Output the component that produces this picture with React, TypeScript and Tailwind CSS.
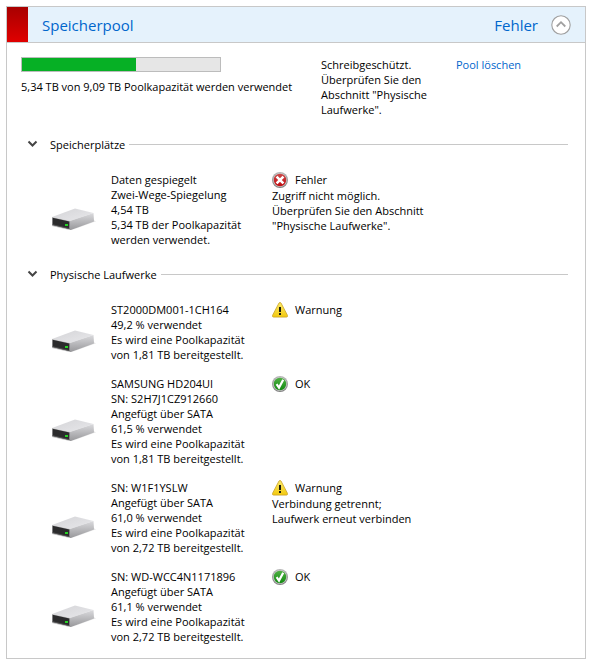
import { useState } from "react";

type Status = "error" | "warning" | "ok";

type Item = {
  lines: string[];
  status: Status;
  label: string;
  details?: string[];
};

const spaces: Item[] = [
  {
    lines: [
      "Daten gespiegelt",
      "Zwei-Wege-Spiegelung",
      "4,54 TB",
      "5,34 TB der Poolkapazität",
      "werden verwendet.",
    ],
    status: "error",
    label: "Fehler",
    details: ["Zugriff nicht möglich.", "Überprüfen Sie den Abschnitt", '"Physische Laufwerke".'],
  },
];

const drives: Item[] = [
  {
    lines: ["ST2000DM001-1CH164", "49,2 % verwendet", "Es wird eine Poolkapazität", "von 1,81 TB bereitgestellt."],
    status: "warning",
    label: "Warnung",
  },
  {
    lines: [
      "SAMSUNG HD204UI",
      "SN: S2H7J1CZ912660",
      "Angefügt über SATA",
      "61,5 % verwendet",
      "Es wird eine Poolkapazität",
      "von 1,81 TB bereitgestellt.",
    ],
    status: "ok",
    label: "OK",
  },
  {
    lines: [
      "SN: W1F1YSLW",
      "Angefügt über SATA",
      "61,0 % verwendet",
      "Es wird eine Poolkapazität",
      "von 2,72 TB bereitgestellt.",
    ],
    status: "warning",
    label: "Warnung",
    details: ["Verbindung getrennt;", "Laufwerk erneut verbinden"],
  },
  {
    lines: [
      "SN: WD-WCC4N1171896",
      "Angefügt über SATA",
      "61,1 % verwendet",
      "Es wird eine Poolkapazität",
      "von 2,72 TB bereitgestellt.",
    ],
    status: "ok",
    label: "OK",
  },
];

function DriveIcon() {
  return (
    <svg width="48" height="48" viewBox="0 0 48 48" aria-hidden="true">
      <defs>
        <linearGradient id="driveTop" x1="0" y1="0" x2="1" y2="1">
          <stop offset="0" stopColor="#d4d4d7" />
          <stop offset="1" stopColor="#e8e8eb" />
        </linearGradient>
        <linearGradient id="driveSide" x1="0" y1="0" x2="0" y2="1">
          <stop offset="0" stopColor="#dadadd" />
          <stop offset="1" stopColor="#98989b" />
        </linearGradient>
      </defs>
      <path d="M22 44 44 36 46 36 44 34z" fill="#e9e9e9" />
      <path d="M2 31 25 22.5 43.5 27 20 35z" fill="url(#driveTop)" />
      <path d="M20 35 43.5 27 44 35.5 21 44 19 44z" fill="url(#driveSide)" />
      <path d="M2 31 20 35 20 44 2 40z" fill="#b6b6b8" />
      <path d="M2.6 31.8 19.4 35.6 19.4 43 2.6 39z" fill="#2b2b2c" />
      <path d="M2.6 38.2 19.4 42.2 19.4 43 2.6 39z" fill="#555" />
      <rect x="15" y="38" width="3" height="2" fill="#27d326" />
    </svg>
  );
}

function StatusIcon({ status }: { status: Status }) {
  if (status === "warning") {
    return (
      <svg width="16" height="16" viewBox="0 0 16 16" aria-hidden="true">
        <defs>
          <linearGradient id="warn" x1="0" y1="0" x2="0" y2="1">
            <stop offset="0" stopColor="#fdec6c" />
            <stop offset="1" stopColor="#f2c80e" />
          </linearGradient>
        </defs>
        <path
          d="M7 1Q8 -.2 9 1L15.5 13.4Q15.9 15 14.5 15.1H1.5Q.1 15 .5 13.4z"
          fill="url(#warn)"
          stroke="#c9a227"
          strokeWidth=".8"
        />
        <path d="M7 5h2v5H7z" fill="#1a1a10" />
        <rect x="7" y="11" width="2" height="2" fill="#1a1a10" />
      </svg>
    );
  }

  const isOk = status === "ok";
  return (
    <svg width="16" height="16" viewBox="0 0 16 16" aria-hidden="true">
      <defs>
        <linearGradient id="ring" x1="0" y1="0" x2="0" y2="1">
          <stop offset="0" stopColor="#b8b8b8" />
          <stop offset="1" stopColor="#7d7d7d" />
        </linearGradient>
        <linearGradient id="okFill" x1="0" y1="0" x2="0" y2="1">
          <stop offset="0" stopColor="#4fb043" />
          <stop offset="1" stopColor="#138a12" />
        </linearGradient>
        <linearGradient id="errorFill" x1="0" y1="0" x2="0" y2="1">
          <stop offset="0" stopColor="#cc4a4a" />
          <stop offset="1" stopColor="#c00c10" />
        </linearGradient>
      </defs>
      <circle cx="8" cy="8" r="8" fill="url(#ring)" />
      <circle cx="8" cy="8" r="6.9" fill="#c6c6c6" />
      <circle cx="8" cy="8" r="6.2" fill={isOk ? "url(#okFill)" : "url(#errorFill)"} />
      {isOk ? (
        <path d="M4.6 8.2 7 11.6 11.2 3.8" fill="none" stroke="#fff" strokeWidth="2.2" />
      ) : (
        <path d="M4.6 4.6 11.4 11.4M11.4 4.6 4.6 11.4" fill="none" stroke="#fff" strokeWidth="2.6" />
      )}
    </svg>
  );
}

function ItemRow({ item }: { item: Item }) {
  return (
    <li className="flex">
      <div className="flex w-[90px] shrink-0 items-center pl-[29px]">
        <DriveIcon />
      </div>
      <div className="w-[161px] shrink-0 whitespace-nowrap">
        {item.lines.map((line) => (
          <p key={line}>{line}</p>
        ))}
      </div>
      <div className="whitespace-nowrap">
        <div className="flex h-4 items-start gap-[7px]">
          <StatusIcon status={item.status} />
          <span>{item.label}</span>
        </div>
        {item.details?.map((line) => (
          <p key={line}>{line}</p>
        ))}
      </div>
    </li>
  );
}

function Section({ title, items }: { title: string; items: Item[] }) {
  const [open, setOpen] = useState(true);

  return (
    <section className="mt-5">
      <h2 className="flex items-center pr-[3px]">
        <button
          type="button"
          aria-expanded={open}
          onClick={() => setOpen(!open)}
          className="flex items-center gap-3 pl-[6px]"
        >
          <svg
            width="11"
            height="11"
            viewBox="0 0 11 11"
            aria-hidden="true"
            className={open ? "" : "-rotate-90"}
          >
            <path d="M1.5 2.5 5.5 6.5 9.5 2.5" fill="none" stroke="#444" strokeWidth="2" />
          </svg>
          <span>{title}</span>
        </button>
        <span className="ml-1 h-px flex-1 bg-[#c8c8c8]" />
      </h2>
      {open && (
        <ul className="mt-5 flex flex-col gap-[14px]">
          {items.map((item) => (
            <ItemRow key={item.lines.join()} item={item} />
          ))}
        </ul>
      )}
    </section>
  );
}

export default function App() {
  const [open, setOpen] = useState(true);

  return (
    <main className="min-h-screen bg-white py-[6px] pr-[9px] pl-[6px] font-['Open_Sans','Noto_Sans',sans-serif] text-[11px] leading-[15px] text-black">
      <div className="border border-[#c8c8c8]">
        <header className="flex h-9 items-center border-b border-[#c8c8c8] bg-[#e5f2fc] text-[15px] leading-5 text-[#0066cc]">
          <span className="w-[21px] shrink-0 self-stretch bg-linear-to-b from-[#a80000] to-[#e00000]" />
          <h1 className="ml-[14px] flex-1">Speicherpool</h1>
          <span>Fehler</span>
          <button
            type="button"
            aria-label="Speicherpool ein- oder ausblenden"
            aria-expanded={open}
            onClick={() => setOpen(!open)}
            className="mr-[14px] ml-[13px]"
          >
            <svg width="20" height="20" viewBox="0 0 20 20" className={open ? "" : "rotate-180"}>
              <circle cx="10" cy="10" r="9.2" fill="#fff" stroke="#a0a0a0" strokeWidth="1.1" />
              <path d="M5.7 11.5 10 7.2 14.3 11.5" fill="none" stroke="#a0a0a0" strokeWidth="1.8" />
            </svg>
          </button>
        </header>

        {open && (
          <div className="p-[14px]">
            <div className="flex">
              <div className="w-[300px] shrink-0">
                <div
                  role="progressbar"
                  aria-label="Poolkapazität"
                  aria-valuenow={58}
                  className="h-[15px] w-[200px] border border-[#bcbcbc] bg-[#e6e6e6]"
                >
                  <div className="h-full w-[114px] bg-[#06b025]" />
                </div>
                <p className="mt-[7px] whitespace-nowrap">5,34 TB von 9,09 TB Poolkapazität werden verwendet</p>
              </div>
              <div className="w-[135px] shrink-0 whitespace-nowrap">
                <p>Schreibgeschützt.</p>
                <p>Überprüfen Sie den</p>
                <p>Abschnitt "Physische</p>
                <p>Laufwerke".</p>
              </div>
              <a href="#" className="self-start whitespace-nowrap text-[#0066cc]">
                Pool löschen
              </a>
            </div>

            <Section title="Speicherplätze" items={spaces} />
            <Section title="Physische Laufwerke" items={drives} />
          </div>
        )}
      </div>
    </main>
  );
}
